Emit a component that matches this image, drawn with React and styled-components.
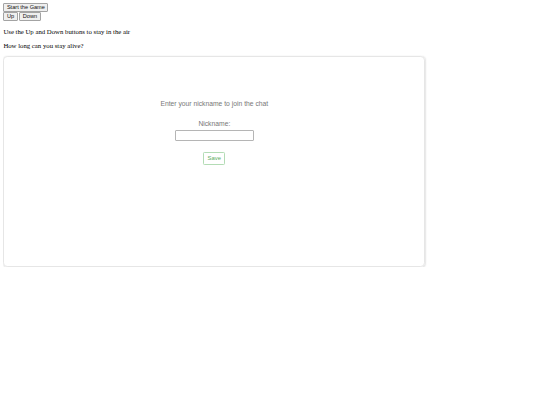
import React, { useState } from 'react'
import styled, { createGlobalStyle } from 'styled-components'

// the reference was taken at 1280px wide, so everything is at 540/1280
const GlobalStyle = createGlobalStyle`
  body {
    margin: 3.375px;
    background: #fff;
    color: #000;
    font-family: "Liberation Serif", "Times New Roman", serif;
    font-size: 6.75px;
  }
`

const Controls = styled.div`
  line-height: 0;
`

const ControlRow = styled.div`
  display: flex;
  gap: 1.7px;
`

const GameButton = styled.button`
  margin: 0;
  padding: 0.6px 2.5px;
  height: 9px;
  font-family: "Liberation Sans", Arial, sans-serif;
  font-size: 5.625px;
  line-height: 1;
  color: #111;
  background: #efefef;
  border: 1px solid #a3a3a3;
  border-radius: 1px;
  cursor: pointer;
`

const Hint = styled.p`
  margin: 6.75px 0;
  line-height: normal;
`

const ChatPanel = styled.div`
  display: flex;
  flex-direction: column;
  align-items: center;
  box-sizing: border-box;
  width: 421.9px;
  height: 210.9px;
  padding-top: 43.2px;
  border: 1px solid #e6e6e6;
  border-radius: 4.2px;
  box-shadow: 0.5px 0.5px 1.5px rgba(0, 0, 0, 0.1);
  font-family: "Liberation Sans", Arial, sans-serif;
  color: #777;
`

const Prompt = styled.div`
  font-size: 6.75px;
  line-height: 7.8px;
`

const Label = styled.label`
  margin-top: 12.5px;
  font-size: 6.75px;
  line-height: 7.8px;
`

const NickInput = styled.input`
  box-sizing: border-box;
  margin-top: 1.7px;
  width: 78.9px;
  height: 11.8px;
  padding: 0 2px;
  font-family: "Liberation Sans", Arial, sans-serif;
  font-size: 5.6px;
  border: 1px solid #b5b5b5;
  border-radius: 1px;
  outline: 0;
`

const SaveButton = styled.button`
  box-sizing: border-box;
  margin-top: 10.5px;
  height: 13.5px;
  padding: 0 3.4px;
  font-family: "Liberation Sans", Arial, sans-serif;
  font-size: 5.9px;
  line-height: 1;
  color: #5aac5e;
  background: #fff;
  border: 1px solid #b3dcb5;
  border-radius: 1.3px;
  cursor: pointer;
`

export default function App() {
  const [nickname, setNickname] = useState('')

  return (
    <>
      <GlobalStyle />
      <Controls>
        <ControlRow>
          <GameButton>Start the Game</GameButton>
        </ControlRow>
        <ControlRow>
          <GameButton>Up</GameButton>
          <GameButton>Down</GameButton>
        </ControlRow>
      </Controls>
      <Hint>Use the Up and Down buttons to stay in the air</Hint>
      <Hint>How long can you stay alive?</Hint>
      <ChatPanel>
        <Prompt>Enter your nickname to join the chat</Prompt>
        <Label htmlFor="nickname">Nickname:</Label>
        <NickInput
          id="nickname"
          value={nickname}
          onChange={(e) => setNickname(e.target.value)}
        />
        <SaveButton>Save</SaveButton>
      </ChatPanel>
    </>
  )
}
